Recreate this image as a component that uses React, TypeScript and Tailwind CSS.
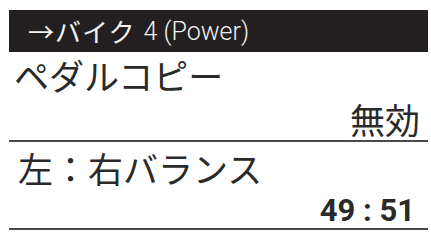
import React from "react";

export default function App() {
  const jp = { fontFamily: '"Noto Sans CJK JP", "Noto Sans", sans-serif' };
  return (
    <div className="w-[431px] h-[232px] bg-white pt-[10px] pl-[9px] pr-[3px] text-[#2a2a2a]" style={jp}>
      <div className="h-[42px] bg-[#231f20] text-[#f2f2f2] flex items-center pl-[19px] text-[26px] leading-none">
        <span className="tracking-[1px]">→バイク</span>
        <span className="ml-[8px] text-[25px] font-light" style={{ fontFamily: 'Roboto, "Noto Sans CJK JP", sans-serif' }}>4 (Power)</span>
      </div>
      <div className="h-[44px] flex items-center pl-[5px] text-[35px] leading-none">ペダルコピー</div>
      <div className="h-[44px] flex items-center justify-end pr-[8px] text-[35px] leading-none">無効</div>
      <div className="h-[2px] bg-[#4a4a4a]" />
      <div className="h-[50px] flex items-center pl-[9px] text-[35px] leading-none">左：右バランス</div>
      <div className="h-[36px] flex items-center justify-end pr-[13px] text-[31px] font-bold leading-none" style={{ fontFamily: 'Roboto, sans-serif' }}>49 : 51</div>
      <div className="h-[2px] bg-[#4a4a4a]" />
    </div>
  );
}
